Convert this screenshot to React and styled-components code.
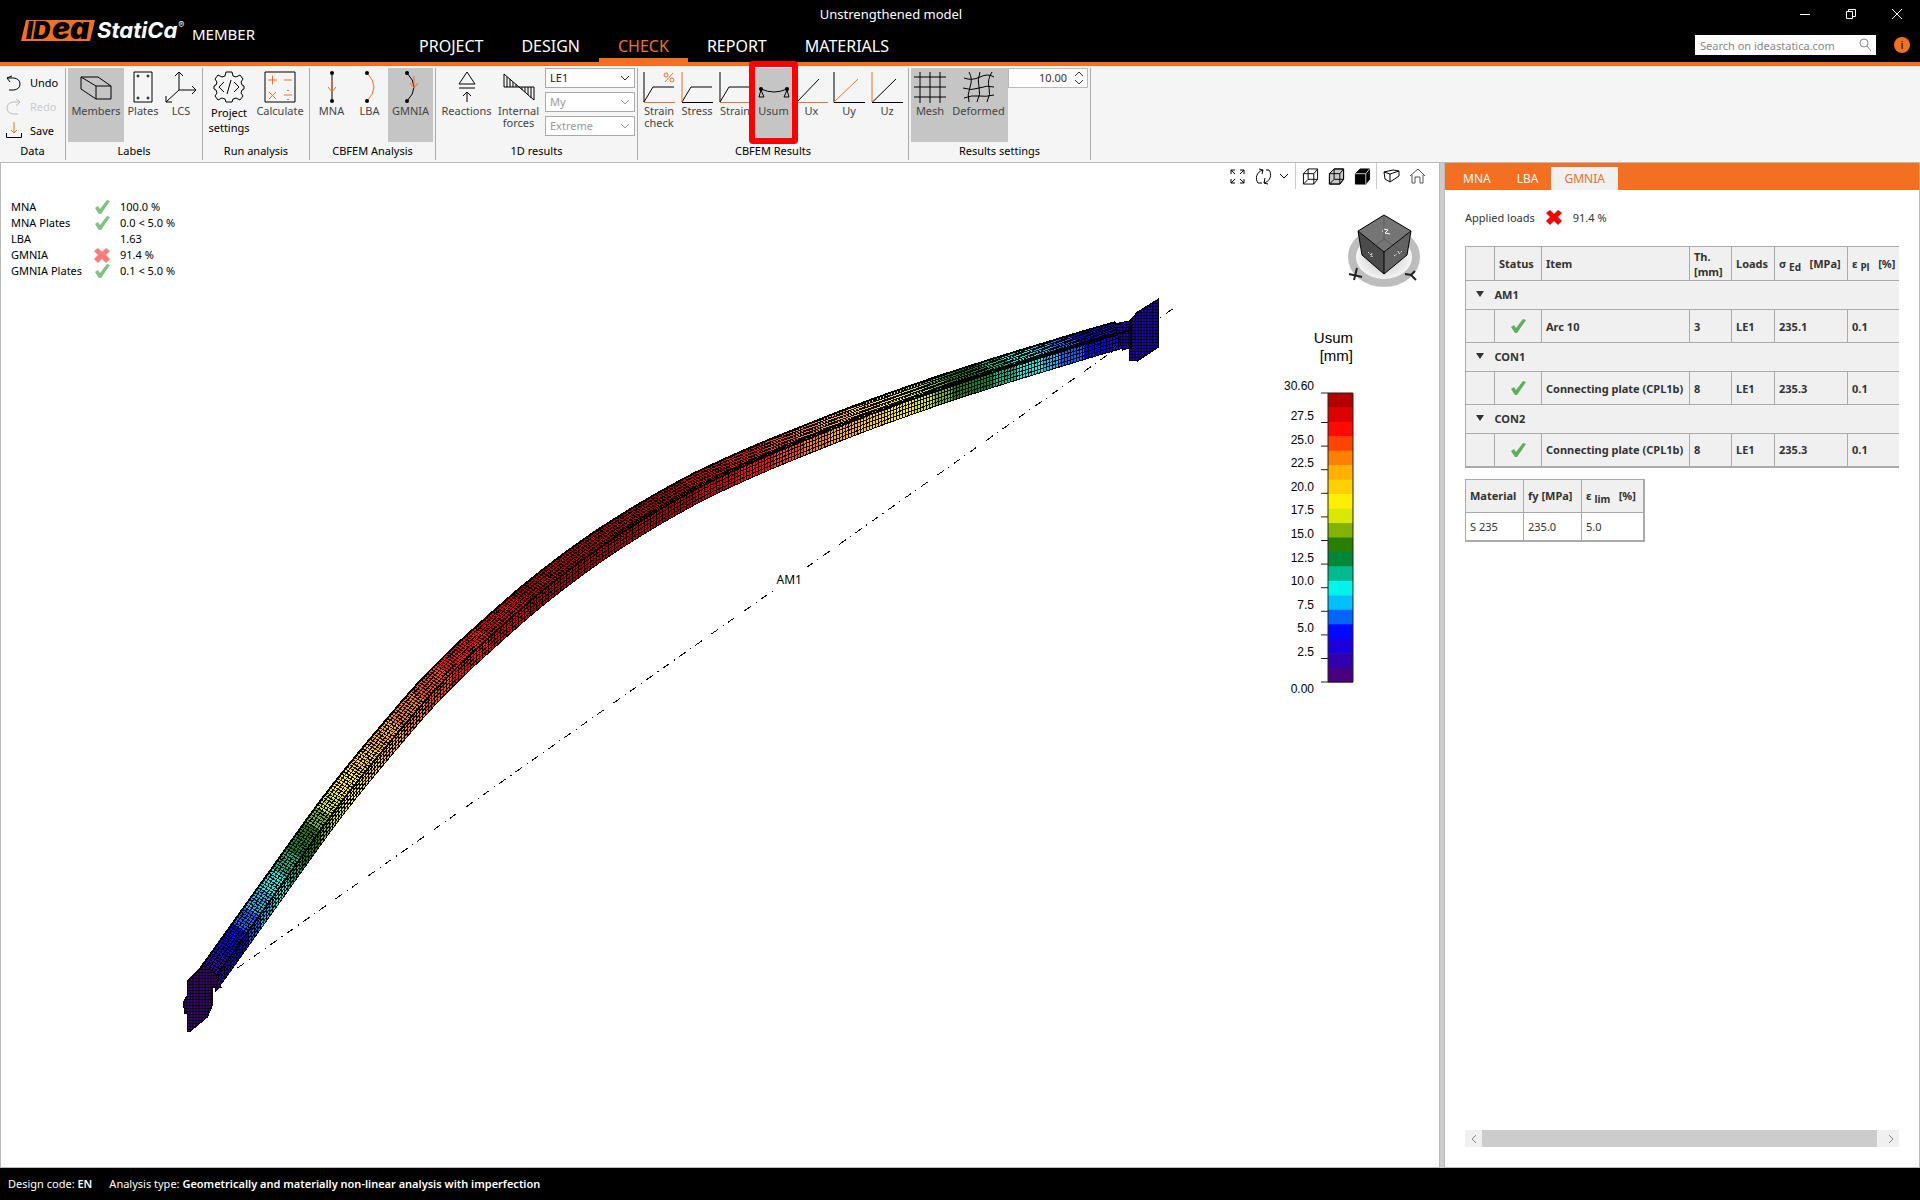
import React from "react";
import styled, { createGlobalStyle } from "styled-components";

const orange = "#f36f21";

/* ---------- ribbon icons, 32 x 32 ---------- */

const ICONS = {
  members: (
    <path d="M1 6h17l13 9v13H16L1 18zM1 6l15 9h15M16 15v13" />
  ),
  plates: (
    <>
      <path d="M7 1h18v30H7z" />
      <circle cx="11" cy="5" r="1" />
      <circle cx="21" cy="5" r="1" />
      <circle cx="11" cy="27" r="1" />
      <circle cx="21" cy="27" r="1" />
    </>
  ),
  lcs: (
    <path d="M14 1v18h17M14 19L1 31M10 5l4-4 4 4M27 15l4 4-4 4M1 25v6h6" />
  ),
  settings: (
    <>
      <path d="M13 1h6l1 4 3 1 4-2 3 4-2 3 1 3 2 1v3l-2 1-1 3 2 3-3 4-4-2-3 1-1 3h-6l-1-3-3-1-4 2-3-4 2-3-1-3-2-1v-3l2-1 1-3-2-3 3-4 4 2 3-1z" />
      <path d="M11 11l-5 5 5 5M21 11l5 5-5 5M18 9l-4 14" />
    </>
  ),
  calculate: (
    <>
      <path d="M1 1h30v30H1z" />
      <path d="M4 9h9M8.500 4.500v9M20 9h8M5 21l7 7M12 21l-7 7M20 24h8" stroke={orange} />
      <path d="M24 19v1M24 28v1" stroke={orange} strokeWidth="2" />
    </>
  ),
  mna: (
    <>
      <path d="M16 2v28" />
      <path d="M16 9v12M12 16l4 5 4-5" stroke={orange} />
      <circle cx="16" cy="2" r="2" fill="#000" stroke="none" />
      <circle cx="16" cy="30" r="2" fill="#000" stroke="none" />
    </>
  ),
  lba: (
    <>
      <path d="M13 2q14 14 0 28" stroke={orange} />
      <circle cx="13" cy="2" r="2" fill="#000" stroke="none" />
      <circle cx="13" cy="30" r="2" fill="#000" stroke="none" />
    </>
  ),
  gmnia: (
    <>
      <path d="M12 2q14 14 0 28" />
      <path d="M19 5v12M15 12l4 5 4-5" stroke={orange} />
      <circle cx="12" cy="2" r="2" fill="#000" stroke="none" />
      <circle cx="12" cy="30" r="2" fill="#000" stroke="none" />
    </>
  ),
  reactions: (
    <path d="M16 1l8 12H8zM8 17h16M16 31V21M12 25l4-4 4 4" />
  ),
  forces: (
    <path d="M1 3v13h30v13zM4 6v10M7 8v8M10 11v5M13 13v3M19 16v3M22 16v5M25 16v8M28 16v11" />
  ),
  strainCheck: (
    <>
      <path d="M1 1v30l9-15h21" />
      <path d="M1 31.500h31M22 11l8-9" stroke={orange} />
      <circle cx="23" cy="4" r="2" stroke={orange} />
      <circle cx="29" cy="9" r="2" stroke={orange} />
    </>
  ),
  stress: (
    <>
      <path d="M1 31l9-15h21M1 31.500h31" />
      <path d="M1 1v30" stroke={orange} />
    </>
  ),
  strain: (
    <>
      <path d="M1 1v30l9-15h21" />
      <path d="M1 31.500h31" stroke={orange} />
    </>
  ),
  usum: (
    <>
      <path d="M3 18q13 6 26 0M3 19l-2 7h5zM29 19l-3 7h5z" />
      <circle cx="3" cy="18" r="2" fill="#000" stroke="none" />
      <circle cx="29" cy="18" r="2" fill="#000" stroke="none" />
    </>
  ),
  ux: (
    <>
      <path d="M1 1v30L23 8" />
      <path d="M1 31.500h31" stroke={orange} />
    </>
  ),
  uy: (
    <>
      <path d="M1 1v30.500h31" />
      <path d="M1 31L25 8" stroke={orange} />
    </>
  ),
  uz: (
    <>
      <path d="M25 8L1 31.500h31" />
      <path d="M1 1v30" stroke={orange} />
    </>
  ),
  mesh: <path d="M6 1v31M16 1v31M26 1v31M0 6h32M0 16h32M0 26h32" />,
  deformed: (
    <path d="M6 1q4 7 1 15t-1 15M17 1q-3 8-1 15t-2 15M29 1q-5 8-3 15t-2 15M1 7q8 3 16-1t14 0M0 17q8 3 16 0t15-1M1 27q8-3 15-2t15-1" />
  ),
};

function RibbonIcon({ name }) {
  return (
    <IconSvg viewBox="0 0 32 32" aria-hidden="true">
      {ICONS[name]}
    </IconSvg>
  );
}

function Chevron({ up }) {
  return (
    <svg width="10" height="6" viewBox="0 0 10 6" fill="none" stroke="currentColor" aria-hidden="true">
      <path d={up ? "M1 5l4-4 4 4" : "M1 1l4 4 4-4"} />
    </svg>
  );
}

function Check({ color = "#5cb05c" }) {
  return (
    <svg width="16" height="16" viewBox="0 0 16 16" role="img" aria-label="passed">
      <path d="M1 9l3-2 2 3 7-9 3 1-9 13H5z" fill={color} />
    </svg>
  );
}

function Cross({ color = "#f00" }) {
  return (
    <svg width="16" height="16" viewBox="0 0 16 16" role="img" aria-label="failed">
      <path d="M4 1l4 4 4-4 4 3-4 4 4 4-4 4-4-4-4 4-4-4 4-4-4-4z" fill={color} />
    </svg>
  );
}

/* ---------- deformed member ---------- */

// top edge of the member in the deformed shape
const EDGE = [
  [200, 968], [233, 922], [263, 880], [329, 789], [400, 703], [433, 667],
  [473, 629], [533, 577], [600, 528], [677, 482], [733, 455], [790, 431],
  [867, 401], [960, 369], [1077, 333], [1115, 322],
];

// colour of the result from this x on
const BANDS = [
  [200, "#3000b0"], [211, "#2000d8"], [218, "#0000ff"], [232, "#0066ff"],
  [244, "#00c0ff"], [258, "#00f5e8"], [272, "#00bb90"], [285, "#008838"],
  [295, "#288000"], [305, "#80b400"], [315, "#d8e800"], [328, "#ffee00"],
  [347, "#ffd000"], [366, "#ffb000"], [387, "#ff7f00"], [410, "#ff4400"],
  [435, "#ff0a00"], [474, "#de0000"], [511, "#b40000"], [680, "#de0000"],
  [720, "#ff0a00"], [758, "#ff4400"], [787, "#ff7f00"], [813, "#ffb000"],
  [843, "#ffd000"], [870, "#ffee00"], [897, "#d8e800"], [918, "#80b400"],
  [936, "#288000"], [955, "#008838"], [978, "#00bb90"], [1000, "#00f5e8"],
  [1028, "#00c0ff"], [1044, "#0066ff"], [1068, "#0000ff"], [1090, "#2000d8"],
  [1115, "#2000d8"],
];

const SIDE = [15, 9];
const DEPTH = 15;

function slope(i) {
  const a = EDGE[Math.max(i - 1, 0)];
  const b = EDGE[Math.min(i + 1, EDGE.length - 1)];
  return (b[1] - a[1]) / (b[0] - a[0]);
}

function edgeY(x) {
  let i = 0;
  while (i < EDGE.length - 2 && EDGE[i + 1][0] < x) i++;
  const [x0, y0] = EDGE[i];
  const [x1, y1] = EDGE[i + 1];
  const h = x1 - x0;
  const t = (x - x0) / h;
  return (
    (2 * t ** 3 - 3 * t ** 2 + 1) * y0 +
    (t ** 3 - 2 * t ** 2 + t) * h * slope(i) +
    (3 * t ** 2 - 2 * t ** 3) * y1 +
    (t ** 3 - t ** 2) * h * slope(i + 1)
  );
}

function sample(from, to, dx = 0, dy = 0) {
  const pts = [];
  for (let x = from; x < to; x += 3) pts.push([x + dx, edgeY(x) + dy]);
  pts.push([to + dx, edgeY(to) + dy]);
  return pts;
}

const toPath = (pts) => "M" + pts.map((p) => `${p[0].toFixed(1)} ${p[1].toFixed(1)}`).join("L");

function bandPath(from, to) {
  const top = sample(from, to);
  const bottom = sample(from, to, SIDE[0], SIDE[1] + DEPTH).reverse();
  const ridgeEnd = [to + SIDE[0], edgeY(to) + SIDE[1]];
  const ridgeStart = [from + SIDE[0], edgeY(from) + SIDE[1]];
  return toPath([...top, ridgeEnd, ...bottom, ridgeStart]) + "z";
}

function crossLines() {
  let d = "";
  let x = 200;
  while (x < 1115) {
    const y = edgeY(x);
    d += `M${x.toFixed(1)} ${y.toFixed(1)}l${SIDE[0]} ${SIDE[1]}`;
    const k = edgeY(x + 1) - y;
    x += 3 / Math.hypot(1, k);
  }
  for (x = 200; x < 1115; x += 3) {
    d += `M${x + SIDE[0]} ${(edgeY(x) + SIDE[1]).toFixed(1)}v${DEPTH}`;
  }
  return d;
}

function longLines() {
  const lines = [];
  for (let k = 0; k <= 5; k++) {
    lines.push(toPath(sample(200, 1115, (SIDE[0] * k) / 5, (SIDE[1] * k) / 5)));
  }
  for (let k = 0; k <= 4; k++) {
    lines.push(toPath(sample(200, 1115, SIDE[0], SIDE[1] + (DEPTH * k) / 4)));
  }
  return lines.join("");
}

const RIGHT_PLATE = "M1113 324L1129 321L1137 312L1158 299V347L1137 361L1129 360V348L1122 350z";
const LEFT_PLATE =
  "M204 966L200 968L187 981V995L183 1002L184 1013H187V1031H190L207 1017L212 1005V987L221 988L214 972z";

function Model() {
  return (
    <Canvas viewBox="1 163 1437 1004" role="img" aria-label="Deformed member">
      <defs>
        <pattern id="plateMesh" width="3" height="3" patternUnits="userSpaceOnUse">
          <path d="M0 0h1v3h-1zM1 0h2v1h-2z" fill="#000" />
        </pattern>
      </defs>
      <g shapeRendering="crispEdges" stroke="#000" fill="none">
        <path d="M1172 309L801 571M237 968L772 591" strokeDasharray="8 6 1 5" />
        {BANDS.slice(0, -1).map(([x, color], i) => (
          <path key={x} d={bandPath(x, BANDS[i + 1][0])} fill={color} stroke="none" />
        ))}
        <path d={crossLines()} />
        <path d={longLines()} />
        <path d={toPath(sample(200, 1115, 15, 9))} strokeWidth="2" />
        <path d={toPath(sample(600, 1115, 13, 8))} />
        <path d={toPath(sample(200, 1115))} strokeWidth="2" />
        <path d={RIGHT_PLATE} fill="#2200d0" />
        <path d={RIGHT_PLATE} fill="url(#plateMesh)" />
        <path d="M1116 334L1130 330V321V348" strokeWidth="2" />
        <path d={LEFT_PLATE} fill="#480088" />
        <path d={LEFT_PLATE} fill="url(#plateMesh)" />
      </g>
      <text x="776" y="584">AM1</text>
    </Canvas>
  );
}

/* ---------- legend ---------- */

const LEGEND_COLORS = [
  "#b40000", "#de0000", "#ff0a00", "#ff4400", "#ff7f00", "#ffb000", "#ffd000",
  "#ffee00", "#d8e800", "#80b400", "#288000", "#008838", "#00bb90", "#00f5e8",
  "#00c0ff", "#0066ff", "#000aff", "#1a00dc", "#3000b0", "#480080",
];
const LEGEND_TICKS = ["27.5", "25.0", "22.5", "20.0", "17.5", "15.0", "12.5", "10.0", "7.5", "5.0", "2.5"];

function Legend() {
  const band = 289 / LEGEND_COLORS.length;
  return (
    <LegendSvg width="80" height="370" viewBox="0 0 80 370">
      <text x="73" y="13" className="title">Usum</text>
      <text x="73" y="31" className="title">[mm]</text>
      {LEGEND_COLORS.map((c, i) => (
        <rect key={c} x="48" y={63 + i * band} width="25" height={band + 0.5} fill={c} />
      ))}
      <path d="M48 63h25v289h-25zM41 63h7M41 352h7" fill="none" stroke="#222" />
      <text x="34" y="60">30.60</text>
      {LEGEND_TICKS.map((t, i) => (
        <g key={t}>
          <path d={`M41 ${92.500 + i * 23.600}h7`} stroke="#222" />
          <text x="34" y={90 + i * 23.600}>{t}</text>
        </g>
      ))}
      <text x="34" y="363">0.00</text>
    </LegendSvg>
  );
}

function NavCube() {
  return (
    <CubeSvg width="76" height="76" viewBox="1346 213 76 76" aria-label="View cube">
      <defs>
        <radialGradient id="shade">
          <stop offset="0" stopColor="#bbb" />
          <stop offset="1" stopColor="#fff" />
        </radialGradient>
      </defs>
      <ellipse cx="1384" cy="257" rx="32" ry="26" fill="url(#shade)" stroke="#bdbdbd" strokeWidth="8" />
      <path d="M1384 215l27 16-27 21-26-21z" fill="#757575" />
      <path d="M1358 231l26 21v22l-22-19z" fill="#4b4b4b" />
      <path d="M1411 231l-27 21v22l23-19z" fill="#626262" />
      <path
        d="M1384 215l27 16-27 21-26-21zM1358 231l4 24 22 19 23-19 4-24M1384 252v22"
        fill="none"
        stroke="#000"
      />
      <path d="M1384 215v24l-22 16M1384 239l23 16" fill="none" stroke="#444" strokeWidth="0.500" />
      <path d="M1384 229l4 1-3 3 5 1M1382 231h1" stroke="#fff" fill="none" />
      <path d="M1368 252l5 5M1372 253l-1 4M1394 256l3-2M1398 251l1 3 3-3" stroke="#ddd" strokeDasharray="2 1" fill="none" />
      <path d="M1349 274l13 3M1354 280l3-12M1405 274l6 1 5 5M1411 275l4-4" stroke="#222" strokeWidth="2" fill="none" />
    </CubeSvg>
  );
}

const BOX = "M1 6v11h11V6zM1 6l5-5h10v11l-4 5M12 6l4-5M6 1v11h10M6 12l-5 5";

function ViewTools() {
  return (
    <Tools>
      <ToolButton aria-label="Zoom all">
        <ToolSvg viewBox="0 0 17 17">
          <path d="M2 6V2h4M2 2l4 4M11 2h4v4M15 2l-4 4M2 11v4h4M2 15l4-4M15 11v4h-4M15 15l-4-4" />
        </ToolSvg>
      </ToolButton>
      <ToolButton aria-label="Rotate">
        <ToolSvg viewBox="0 0 17 17">
          <path d="M3 15C0 11 1 4 8 2M4 1l4 1-1 4M14 2c3 4 2 11-5 13M13 16l-4-1 1-5M14 2h-3M3 15h4" />
        </ToolSvg>
      </ToolButton>
      <NarrowTool aria-label="Rotate options"><Chevron /></NarrowTool>
      <ToolDivider />
      <ToolButton aria-label="Wireframe">
        <ToolSvg viewBox="0 0 17 18"><path d={BOX} /></ToolSvg>
      </ToolButton>
      <ToolButton aria-label="Transparent">
        <ToolSvg viewBox="0 0 17 18">
          <path d="M1 6l5-5h10v11l-4 5H1z" fill="#c8c8c8" />
          <path d={BOX} />
        </ToolSvg>
      </ToolButton>
      <ToolButton aria-label="Solid">
        <ToolSvg viewBox="0 0 17 18">
          <path d="M1 6l5-5h10v11l-4 5H1z" fill="#000" />
          <path d="M1 6h11v11M12 6l4-5" stroke="#fff" strokeWidth="0.800" />
        </ToolSvg>
      </ToolButton>
      <ToolDivider />
      <ToolButton aria-label="Perspective">
        <ToolSvg viewBox="0 0 17 17">
          <path d="M1 4l9-2 6 1v5l-9 6-5-3zM1 4l6 2 9-3M7 6v8" />
        </ToolSvg>
      </ToolButton>
      <ToolButton aria-label="Home view">
        <ToolSvg viewBox="0 0 17 17" stroke="#555">
          <path d="M1 8l8-7 7 7M3 7v8h3v-6h5v6h3V7" />
        </ToolSvg>
      </ToolButton>
    </Tools>
  );
}

/* ---------- page data ---------- */

const SUMMARY = [
  ["MNA", "ok", "100.0 %"],
  ["MNA Plates", "ok", "0.0 < 5.0 %"],
  ["LBA", "", "1.63"],
  ["GMNIA", "fail", "91.4 %"],
  ["GMNIA Plates", "ok", "0.1 < 5.0 %"],
];

const ITEMS = [
  { group: "AM1", item: "Arc 10", th: "3", loads: "LE1", stress: "235.1", strain: "0.1" },
  { group: "CON1", item: "Connecting plate (CPL1b)", th: "8", loads: "LE1", stress: "235.3", strain: "0.1" },
  { group: "CON2", item: "Connecting plate (CPL1b)", th: "8", loads: "LE1", stress: "235.3", strain: "0.1" },
];

function Tool({ icon, label, width, active, dark, children }) {
  return (
    <RibbonButton $w={width} $active={active} $dark={dark}>
      <RibbonIcon name={icon} />
      <span>{label}</span>
      {children}
    </RibbonButton>
  );
}

function Group({ title, children }) {
  return (
    <RibbonGroup>
      <GroupBody>{children}</GroupBody>
      <GroupTitle>{title}</GroupTitle>
    </RibbonGroup>
  );
}

function Picker({ label, value, disabled }) {
  return (
    <SelectBox $disabled={disabled}>
      <select aria-label={label} disabled={disabled} defaultValue={value}>
        <option>{value}</option>
      </select>
      <Chevron />
    </SelectBox>
  );
}

function TopBar() {
  return (
    <Header>
      <TitleRow>
        <Title>Unstrengthened model</Title>
        <WindowButton aria-label="Minimize">
          <svg width="10" height="10" stroke="#fff" fill="none"><path d="M0 5.500h10" /></svg>
        </WindowButton>
        <WindowButton aria-label="Restore">
          <svg width="10" height="10" stroke="#fff" fill="none"><path d="M.5 2.500h6v7h-6zM2.500 2.500v-2h7v7h-3" /></svg>
        </WindowButton>
        <WindowButton aria-label="Close">
          <svg width="10" height="10" stroke="#fff" fill="none"><path d="M0 0l10 10M10 0L0 10" /></svg>
        </WindowButton>
      </TitleRow>
      <Brand>
        <svg width="168" height="48" viewBox="0 -12 168 48" aria-label="IDEA StatiCa">
          <path d="M6 1h69l-5 21H1z" fill={orange} />
          <text x="6" y="20" className="mark">ID</text>
          <text x="32" y="20" className="mark big">ea</text>
          <text x="77" y="19" className="name">StatiCa</text>
          <text x="158" y="9" className="reg">®</text>
        </svg>
        <Product>MEMBER</Product>
      </Brand>
      <Tabs>
        {["PROJECT", "DESIGN", "CHECK", "REPORT", "MATERIALS"].map((t) => (
          <Tab key={t} $active={t === "CHECK"}>{t}</Tab>
        ))}
      </Tabs>
      <HeaderTools>
        <Search>
          <input type="text" aria-label="Search" placeholder="Search on ideastatica.com" />
          <svg width="14" height="14" viewBox="0 0 14 14" fill="none" stroke="#888" aria-hidden="true">
            <circle cx="7" cy="5" r="4" />
            <path d="M10 8l4 5" />
          </svg>
        </Search>
        <Info aria-label="Information">i</Info>
      </HeaderTools>
    </Header>
  );
}

function Ribbon() {
  return (
    <RibbonBar>
      <Group title="Data">
        <DataList>
          <DataButton>
            <svg width="16" height="16" viewBox="0 0 16 16"><path d="M6 1L1 3l3 4M1 3h7q6 1 6 6t-6 6H3" /></svg>
            Undo
          </DataButton>
          <DataButton disabled>
            <svg width="16" height="16" viewBox="0 0 16 16"><path d="M10 0l4 3-4 4M14 3H7Q1 4 1 9t6 6h5" /></svg>
            Redo
          </DataButton>
          <DataButton>
            <svg width="16" height="16" viewBox="0 0 16 16">
              <path d="M.5 11v4.500h15V11" />
              <path d="M8 0v11M5 8l3 3 3-3" stroke={orange} />
            </svg>
            Save
          </DataButton>
        </DataList>
      </Group>
      <Group title="Labels">
        <Tool icon="members" label="Members" width={56} active />
        <Tool icon="plates" label="Plates" width={38} />
        <Tool icon="lcs" label="LCS" width={38} />
      </Group>
      <Group title="Run analysis">
        <Tool icon="settings" label="Project settings" width={48} dark />
        <Tool icon="calculate" label="Calculate" width={54} />
      </Group>
      <Group title="CBFEM Analysis">
        <Tool icon="mna" label="MNA" width={39} />
        <Tool icon="lba" label="LBA" width={37} />
        <Tool icon="gmnia" label="GMNIA" width={45} active />
      </Group>
      <Group title="1D results">
        <Tool icon="reactions" label="Reactions" width={57} />
        <Tool icon="forces" label="Internal forces" width={47} />
        <Pickers>
          <Picker label="Load" value="LE1" />
          <Picker label="Component" value="My" disabled />
          <Picker label="Section" value="Extreme" disabled />
        </Pickers>
      </Group>
      <Group title="CBFEM Results">
        <Tool icon="strainCheck" label="Strain check" width={38} />
        <Tool icon="stress" label="Stress" width={38} />
        <Tool icon="strain" label="Strain" width={38} />
        <Tool icon="usum" label="Usum" width={39} active>
          <Highlight />
        </Tool>
        <Tool icon="ux" label="Ux" width={37} />
        <Tool icon="uy" label="Uy" width={38} />
        <Tool icon="uz" label="Uz" width={38} />
      </Group>
      <Group title="Results settings">
        <Tool icon="mesh" label="Mesh" width={38} active />
        <Tool icon="deformed" label="Deformed" width={59} active />
        <Spinner>
          <input type="text" aria-label="Deformation scale" defaultValue="10.00" />
          <SpinButtons>
            <button aria-label="Increase"><Chevron up /></button>
            <button aria-label="Decrease"><Chevron /></button>
          </SpinButtons>
        </Spinner>
      </Group>
    </RibbonBar>
  );
}

function Results() {
  return (
    <Panel>
      <PanelTabs>
        {["MNA", "LBA", "GMNIA"].map((t) => (
          <PanelTab key={t} $active={t === "GMNIA"}>{t}</PanelTab>
        ))}
      </PanelTabs>
      <PanelBody>
        <Applied>
          Applied loads <Cross /> 91.4 %
        </Applied>
        <TableClip>
          <ItemTable>
            <colgroup>
              {[29, 47, 148, 42, 43, 73, 62].map((w, i) => (
                <Col key={i} $w={w} />
              ))}
            </colgroup>
            <thead>
              <tr>
                <th aria-label="Expand" />
                <th>Status</th>
                <th>Item</th>
                <th>Th. [mm]</th>
                <th>Loads</th>
                <th>σ <sub>Ed</sub> &nbsp; [MPa]</th>
                <th>ε <sub>Pl</sub> &nbsp; [%]</th>
              </tr>
            </thead>
            {ITEMS.map((r) => (
              <tbody key={r.group}>
                <GroupRow>
                  <td>
                    <svg width="8" height="6" aria-hidden="true"><path d="M0 0h8l-4 6z" fill="#333" /></svg>
                  </td>
                  <td colSpan="6">{r.group}</td>
                </GroupRow>
                <ItemRow>
                  <td />
                  <td><Check /></td>
                  <td>{r.item}</td>
                  <td>{r.th}</td>
                  <td>{r.loads}</td>
                  <td>{r.stress}</td>
                  <td>{r.strain}</td>
                </ItemRow>
              </tbody>
            ))}
          </ItemTable>
        </TableClip>
        <MaterialTable>
          <colgroup>
            <Col $w={58} />
            <Col $w={58} />
            <Col $w={62} />
          </colgroup>
          <thead>
            <tr>
              <th>Material</th>
              <th>fy [MPa]</th>
              <th>ε <sub>lim</sub> &nbsp; [%]</th>
            </tr>
          </thead>
          <tbody>
            <tr>
              <td>S 235</td>
              <td>235.0</td>
              <td>5.0</td>
            </tr>
          </tbody>
        </MaterialTable>
        <Scrollbar>
          <button aria-label="Scroll left">
            <svg width="6" height="8"><path d="M5 0L1 4l4 4" /></svg>
          </button>
          <Thumb />
          <button aria-label="Scroll right">
            <svg width="6" height="8"><path d="M1 0l4 4-4 4" /></svg>
          </button>
        </Scrollbar>
      </PanelBody>
    </Panel>
  );
}

function App() {
  return (
    <Page>
      <Global />
      <TopBar />
      <Ribbon />
      <Main>
        <Viewport>
          <Model />
          <SummaryTable>
            <tbody>
              {SUMMARY.map(([name, state, value]) => (
                <tr key={name}>
                  <th scope="row">{name}</th>
                  <td>
                    {state === "ok" && <Check color="#7fc27f" />}
                    {state === "fail" && <Cross color="#ff7b7b" />}
                  </td>
                  <td>{value}</td>
                </tr>
              ))}
            </tbody>
          </SummaryTable>
          <Overlay>
            <ViewTools />
            <NavCube />
            <Legend />
          </Overlay>
        </Viewport>
        <Splitter />
        <Results />
      </Main>
      <StatusBar>
        <span>Design code: <b>EN</b></span>
        <span>Analysis type: <b>Geometrically and materially non-linear analysis with imperfection</b></span>
      </StatusBar>
    </Page>
  );
}

export default App;

const Global = createGlobalStyle`
  * {
    box-sizing: border-box;
  }
  body {
    margin: 0;
    font-family: "Noto Sans", "Open Sans", sans-serif;
    font-size: 11px;
    color: #000;
  }
  button, input, select {
    font: inherit;
    color: inherit;
    margin: 0;
    padding: 0;
    border: 0;
    border-radius: 0;
    background: none;
  }
  svg {
    display: block;
    flex: none;
  }
`;

const Page = styled.div`
  display: flex;
  flex-direction: column;
  height: 100vh;
`;

const Header = styled.header`
  display: grid;
  grid-template-columns: 400px 1fr auto;
  grid-template-rows: 28px 34px;
  background: #000;
  color: #fff;
  border-bottom: 4px solid ${orange};
  flex: none;
  box-sizing: content-box;
`;

const TitleRow = styled.div`
  grid-column: 1 / -1;
  grid-row: 1;
  display: flex;
`;

const Title = styled.div`
  flex: 1;
  text-align: center;
  font-size: 13px;
  line-height: 28px;
`;

const WindowButton = styled.button`
  width: 46px;
  display: flex;
  justify-content: center;
  align-items: center;
`;

const Brand = styled.div`
  grid-column: 1;
  grid-row: 1 / 3;
  display: flex;
  align-items: center;
  gap: 4px;
  padding-left: 20px;

  text {
    font-family: Inter, "Liberation Sans", sans-serif;
    font-weight: 700;
    font-style: italic;
    fill: #fff;
  }
  .mark {
    fill: #000;
    font-size: 24px;
    font-weight: 900;
  }
  .big {
    font-size: 30px;
  }
  .name {
    font-size: 22px;
  }
  .reg {
    font-size: 9px;
    font-weight: 400;
  }
`;

const Product = styled.span`
  font-size: 15px;
  padding-top: 6px;
`;

const Tabs = styled.nav`
  grid-column: 2;
  grid-row: 2;
  display: flex;
`;

const Tab = styled.button`
  padding: 2px 19px 0;
  font-size: 16px;
  color: ${(props) => (props.$active ? orange : "#fff")};
  border-top: 4px solid transparent;
  border-bottom: 4px solid ${(props) => (props.$active ? orange : "transparent")};
`;

const HeaderTools = styled.div`
  grid-column: 3;
  grid-row: 2;
  display: flex;
  align-items: center;
  gap: 18px;
  padding-right: 10px;
`;

const Search = styled.label`
  display: flex;
  align-items: center;
  width: 181px;
  height: 20px;
  padding: 0 5px;
  background: #fff;

  input {
    flex: 1;
    min-width: 0;
    outline: 0;
  }
  input::placeholder {
    color: #888;
    opacity: 1;
  }
`;

const Info = styled.button`
  width: 16px;
  height: 16px;
  border-radius: 8px;
  background: ${orange};
  color: #000;
  line-height: 16px;
`;

const RibbonBar = styled.div`
  display: flex;
  flex: none;
  padding: 2px 0;
  background: #f5f5f5;
  border-bottom: 1px solid #bbb;
`;

const RibbonGroup = styled.section`
  display: flex;
  flex-direction: column;
  padding: 0 2px;
  border-right: 1px solid #aaa;
`;

const GroupBody = styled.div`
  display: flex;
  height: 74px;
`;

const GroupTitle = styled.div`
  height: 18px;
  line-height: 18px;
  text-align: center;
`;

const RibbonButton = styled.button`
  position: relative;
  display: flex;
  flex-direction: column;
  align-items: center;
  width: ${(props) => props.$w}px;
  padding-top: 3px;
  gap: 2px;
  background: ${(props) => (props.$active ? "#c5c5c5" : "none")};
  color: ${(props) => (props.$dark ? "#000" : "#444")};
  line-height: ${(props) => (props.$dark ? 15 : 12)}px;
`;

const IconSvg = styled.svg`
  width: 32px;
  height: 32px;
  fill: none;
  stroke: #000;
`;

// marks the result that is being explained
const Highlight = styled.i`
  position: absolute;
  inset: -7px -5px -2px;
  border: 6px solid #f00;
  border-radius: 4px;
  z-index: 1;
`;

const DataList = styled.div`
  display: flex;
  flex-direction: column;
  justify-content: space-between;
  padding: 3px 1px 0 4px;
`;

const DataButton = styled.button`
  display: flex;
  align-items: center;
  gap: 8px;
  height: 24px;
  min-width: 56px;

  svg {
    fill: none;
    stroke: #000;
  }
  &:disabled {
    color: #ccc;
  }
  &:disabled svg {
    stroke: #bbb;
  }
`;

const Pickers = styled.div`
  display: flex;
  flex-direction: column;
  gap: 4px;
  padding: 0 0 0 3px;
`;

const SelectBox = styled.div`
  position: relative;
  width: 90px;
  height: 20px;
  border: 1px solid #aaa;
  background: #fff;
  color: ${(props) => (props.$disabled ? "#999" : "#222")};

  select {
    display: block;
    appearance: none;
    width: 100%;
    height: 100%;
    padding: 0 0 2px 4px;
    opacity: 1;
  }
  svg {
    position: absolute;
    right: 4px;
    top: 6px;
    pointer-events: none;
  }
`;

const Spinner = styled.div`
  display: flex;
  width: 80px;
  height: 20px;
  border: 1px solid #bbb;
  background: #fff;
  color: #333;

  input {
    width: 58px;
    padding-bottom: 2px;
    text-align: right;
  }
`;

const SpinButtons = styled.span`
  display: flex;
  flex-direction: column;
  justify-content: space-between;
  padding: 2px 0 2px 7px;

  button {
    display: block;
  }
`;

const Main = styled.main`
  display: flex;
  flex: 1;
  min-height: 0;
`;

const Viewport = styled.section`
  position: relative;
  flex: 1;
  min-width: 0;
  border-left: 1px solid #bbb;
  border-bottom: 1px solid #bbb;
`;

const Canvas = styled.svg`
  position: absolute;
  inset: 0;
  width: 100%;
  height: 100%;

  text {
    font-size: 12px;
  }
`;

const SummaryTable = styled.table`
  position: absolute;
  top: 36px;
  left: 10px;
  border-collapse: collapse;
  line-height: 16px;

  th,
  td {
    height: 16px;
    padding: 0;
    font-weight: 400;
    text-align: left;
  }
  th {
    min-width: 83px;
  }
  td:nth-child(2) {
    min-width: 26px;
  }
`;

const Overlay = styled.div`
  position: absolute;
  top: 0;
  right: 0;
  display: flex;
  flex-direction: column;
  align-items: flex-end;
`;

const Tools = styled.div`
  display: flex;
  align-items: center;
  height: 26px;
  padding-right: 9px;
`;

const ToolButton = styled.button`
  display: flex;
  justify-content: center;
  width: 26px;
`;

const NarrowTool = styled(ToolButton)`
  width: 18px;
  padding-right: 2px;
`;

const ToolDivider = styled.i`
  align-self: stretch;
  width: 1px;
  margin: 0 1px;
  background: #ccc;
`;

const ToolSvg = styled.svg.attrs((props) => ({ stroke: props.stroke || "#000" }))`
  width: 17px;
  height: 17px;
  fill: none;
`;

const CubeSvg = styled.svg`
  margin: 24px 17px 0 0;
`;

const LegendSvg = styled.svg`
  margin: 41px 79px 0 0;

  text {
    font-family: "Liberation Sans", Arial, sans-serif;
    font-size: 12px;
    text-anchor: end;
  }
  .title {
    font-size: 15px;
  }
`;

const Splitter = styled.div`
  width: 6px;
  background: #ccc;
  border: 1px solid #bbb;
  border-width: 0 1px;
`;

const Panel = styled.aside`
  display: flex;
  flex-direction: column;
  width: 475px;
  border-right: 1px solid #bbb;
  border-bottom: 1px solid #bbb;
  color: #333;
`;

const PanelTabs = styled.nav`
  display: flex;
  align-items: flex-end;
  height: 27px;
  padding-left: 5px;
  background: ${orange};
`;

const PanelTab = styled.button`
  height: 23px;
  padding: 0 13px;
  font-size: 12px;
  background: ${(props) => (props.$active ? "#f0f0f0" : "none")};
  color: ${(props) => (props.$active ? orange : "#fff")};
`;

const PanelBody = styled.div`
  display: flex;
  flex-direction: column;
  flex: 1;
  padding: 19px 20px 20px;
`;

const Applied = styled.p`
  display: flex;
  align-items: center;
  gap: 11px;
  height: 16px;
  margin: 0 0 21px;
`;

const TableClip = styled.div`
  overflow: hidden;
`;

const Col = styled.col`
  width: ${(props) => props.$w}px;
`;

const BaseTable = styled.table`
  border-collapse: collapse;
  table-layout: fixed;

  th,
  td {
    padding: 0 4px;
    border: 1px solid #aaa;
    text-align: left;
    line-height: 15px;
  }
  th {
    background: #f0f0f0;
    font-weight: 700;
    white-space: nowrap;
  }
  sub {
    font-size: 10px;
    line-height: 0;
  }
`;

const ItemTable = styled(BaseTable)`
  width: 444px;
  background: #f0f0f0;
  border-bottom: 2px solid #aaa;
  font-weight: 700;

  th {
    height: 34px;
  }
  th:nth-child(4) {
    white-space: normal;
  }
`;

const GroupRow = styled.tr`
  td {
    height: 29px;
    padding: 0 0 2px;
    border-right: 0;
  }
  td:first-child svg {
    margin: 0 auto;
  }
  td + td {
    border-left: 0;
  }
`;

const ItemRow = styled.tr`
  td {
    height: 33px;
    white-space: nowrap;
  }
  td:nth-child(2) svg {
    margin: 0 auto;
  }
`;

const MaterialTable = styled(BaseTable)`
  width: 178px;
  margin-top: 11px;
  border: 1px solid #aaa;
  border-width: 1px 2px 2px 1px;

  th {
    height: 33px;
  }
  td {
    height: 29px;
  }
`;

const Scrollbar = styled.div`
  display: flex;
  height: 17px;
  margin-top: auto;
  background: #f0f0f0;

  button {
    display: flex;
    justify-content: center;
    align-items: center;
    width: 17px;
  }
  svg {
    fill: none;
    stroke: #888;
  }
`;

const Thumb = styled.div`
  flex: 1;
  margin-right: 5px;
  background: #ccc;
`;

const StatusBar = styled.footer`
  display: flex;
  flex: none;
  align-items: center;
  gap: 17px;
  height: 32px;
  padding: 0 8px 2px;
  background: #000;
  color: #fff;

  b {
    font-weight: 600;
  }
`;
